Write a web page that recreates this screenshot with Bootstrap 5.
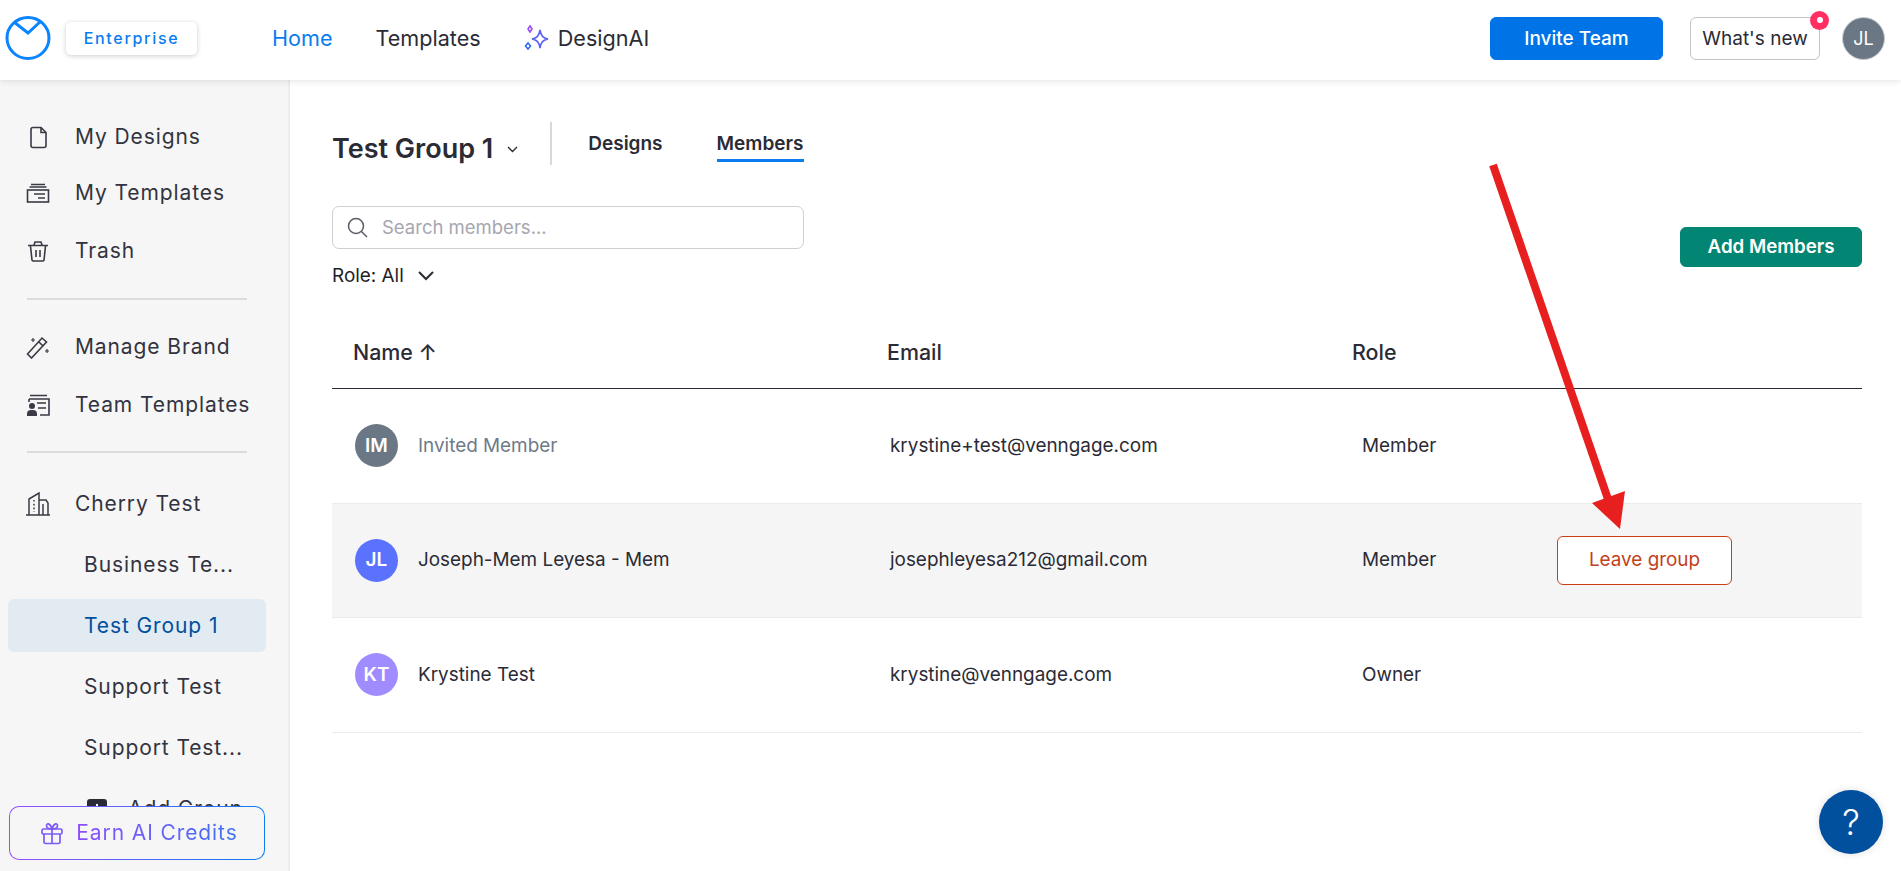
<!DOCTYPE html>
<html lang="en">

<head>
    <meta charset="UTF-8" />
    <meta name="viewport" content="width=device-width, initial-scale=1.0" />
    <title>Test Group 1 - Members</title>
    <link rel="stylesheet" href="https://cdn.jsdelivr.net/npm/bootstrap@5.3.3/dist/css/bootstrap.min.css">
    <style>
        html, body { height: 100%; overflow: hidden; }
        body { font-family: Inter, "Liberation Sans", sans-serif; color: #2b2b36; background: #fff; }

        /* top bar */
        .top-bar { height: 80px; padding: 0 16px 4px 5px; background: #fff; box-shadow: 0 1px 6px rgba(0, 0, 0, .12); position: relative; z-index: 3; }
        .plan-tag { width: 131px; height: 33px; margin-left: 15px; border-radius: 5px; box-shadow: 0 1px 5px rgba(0, 0, 0, .2); color: #0a7cf0; font-size: 16px; font-weight: 500; letter-spacing: 1.7px; }
        .top-link { font-size: 21.6px; color: #2b2b36; text-decoration: none; }
        .top-link.on { color: #0a7cf0; }
        .top-links { margin-left: 75px; gap: 43px; }
        .invite-btn { width: 173px; height: 43px; padding: 3px 0 0; background: #0073e6; border-color: #0073e6; font-size: 19px; font-weight: 500; }
        .new-btn { width: 130px; height: 43px; margin-left: 27px; padding: 3px 0 0; border: 1px solid #c4c4c4; font-size: 19px; color: #2b2b36; background: #fff; }
        .new-dot { top: -7px; right: -10px; width: 19px; height: 19px; background: #ff2f63; }
        .new-dot::after { content: ""; width: 6px; height: 6px; border-radius: 50%; background: #fff; }
        .user-pic { width: 43px; height: 43px; margin-left: 22px; background: #6b7785; color: #fff; font-size: 18px; border: 1px solid #c9cdd2; }

        /* left column */
        .page-body { height: calc(100% - 80px); }
        .side-col { width: 290px; flex: none; padding-top: 28px; background: #f6f6f6; border-right: 2px solid #ededed; overflow: hidden; }
        .side-link { height: 57px; padding-left: 26px; font-size: 21px; letter-spacing: .9px; color: #333340; }
        .side-link.up { margin-top: -1px; margin-bottom: 1px; }
        .side-link svg { width: 24px; height: 24px; margin-right: 25px; flex: none; }
        .side-rule { width: 220px; margin: 19px 0 19px 27px; border-top: 2px solid #dcdcdc; opacity: 1; }
        .side-rule.tight { margin-top: 18px; margin-bottom: 22px; }
        .side-sub { height: 53px; margin: 8px 0 0 8px; width: 258px; padding-left: 76px; font-size: 21px; letter-spacing: .9px; color: #333340; border-radius: 6px; }
        .side-sub.first { margin-top: 6px; }
        .side-sub.on { background: #e2eaf2; color: #00509d; }
        .add-sign { margin: 0 21px 0 3px; flex: none; }
        .credit-btn { position: absolute; left: 9px; top: 726px; width: 256px; height: 54px; padding: 0 0 0 4px; gap: 12px; border: 1px solid transparent; border-radius: 10px; background: linear-gradient(#f6f6f6, #f6f6f6) padding-box, linear-gradient(90deg, #9a4dff, #0a7cf0) border-box; font-size: 21px; letter-spacing: .9px; }
        .credit-text { background: linear-gradient(90deg, #8b4dff, #3f72f0); -webkit-background-clip: text; background-clip: text; color: transparent; }

        /* main column */
        .main-col { padding: 0 39px 0 42px; min-width: 0; }
        .group-head { height: 85px; padding-top: 42px; }
        .group-title { height: 43px; padding-top: 11px; }
        .group-name { font-size: 27px; font-weight: 600; margin: 0; }
        .group-caret { margin-left: 14px; }
        .head-sep { width: 2px; height: 43px; margin: 0 36px 0 32px; background: #d8d8d8; }
        .tab-row { height: 43px; }
        .tab-item { font-size: 19px; font-weight: 600; color: #2b2b36; text-decoration: none; padding-bottom: 0; border-bottom: 3px solid transparent; margin-right: 54px; margin-top: 5px; }
        .tab-item.on { border-bottom-color: #0a7cf0; }
        .tool-row { margin-top: 41px; height: 96px; }
        .find-box { width: 472px; height: 43px; padding-left: 14px; border: 1px solid #cfd0d4; border-radius: 7px; }
        .find-box input { border: 0; outline: 0; padding: 0; margin-left: 14px; font-size: 18.5px; flex: 1; background: transparent; }
        .find-box input::placeholder { color: #a6a6b0; }
        .role-pick { margin-top: 15px; font-size: 18.9px; line-height: 24px; color: #1e1e28; }
        .role-caret { margin-left: 14px; }
        .add-btn { width: 182px; height: 40px; margin-top: 21px; padding: 0; background: #028673; border-color: #028673; font-size: 18.7px; font-weight: 600; }

        .member-tbl { table-layout: fixed; width: 100%; margin: 0; font-size: 18.9px; border-collapse: separate; border-spacing: 0; }
        .member-tbl th { height: 87px; font-size: 21.4px; font-weight: 500; vertical-align: middle; border-bottom: 1px solid #2b2b36; padding: 14px 0 0 21px; color: #2b2b36; }
        .member-tbl td { height: 114.5px; padding: 0; vertical-align: middle; border-bottom: 1px solid #ebebeb; color: #2b2b36; background: transparent; box-shadow: none; }
        .member-tbl tr.hov td { background: #f5f5f5; }
        .face { width: 43px; height: 43px; margin: 0 20px 0 23px; color: #fff; font-size: 19px; font-weight: 600; flex: none; }
        .face-grey { background: #6b7785; }
        .face-blue { background: #5b72ff; }
        .face-lilac { background: #a18cff; }
        .invited { color: #6f7a87; }
        .col-name { width: 555px; }
        .col-mail { width: 465px; }
        .col-role { width: 205px; }
        .member-tbl th.col-mail, .member-tbl th.col-role { padding-left: 0; }
        .member-tbl td.cell-mail { padding-left: 3px; }
        .member-tbl td.cell-role { padding-left: 10px; }
        .leave-btn { width: 175px; height: 49px; padding: 0; border: 1px solid #cc3d14; background: #fff; color: #c2411c; font-size: 18.9px; font-weight: 400; }

        /* things on top of the page */
        .red-arrow { position: absolute; left: 0; top: 0; z-index: 5; pointer-events: none; }
        .help-btn { position: absolute; right: 18px; bottom: 17px; width: 64px; height: 64px; background: #00509d; color: #fff; font-size: 35px; font-weight: 300; box-shadow: 0 0 8px rgba(0, 0, 0, .12); z-index: 6; }
    </style>
</head>

<body>

    <header class="top-bar d-flex align-items-center">
        <svg width="46" height="44" viewBox="0 0 46 44">
            <ellipse cx="23" cy="22" rx="21" ry="20.5" fill="none" stroke="#0a84ff" stroke-width="3" />
            <path d="M9 6 L23 17 L36 5" fill="none" stroke="#0a84ff" stroke-width="3" />
        </svg>
        <div class="plan-tag d-flex align-items-center justify-content-center">Enterprise</div>
        <nav class="top-links d-flex align-items-center">
            <a class="top-link on" href="#">Home</a>
            <a class="top-link" href="#">Templates</a>
            <a class="top-link d-flex align-items-center gap-2" href="#">
                <svg width="26" height="28" viewBox="0 0 26 28" fill="none" stroke-width="1.6">
                    <path d="M16 6 C17 12 19 14 24 15 C19 16 17 18 16 24 C15 18 13 16 8 15 C13 14 15 12 16 6Z" stroke="#5a63f5" />
                    <path d="M6 2 L8 5 L6 8 L4 5Z" stroke="#9a4dff" />
                    <path d="M4 19 L6.5 22 L4 25 L1.5 22Z" stroke="#2f6df0" />
                </svg>
                DesignAI
            </a>
        </nav>
        <button class="btn btn-primary invite-btn ms-auto" type="button">Invite Team</button>
        <button class="btn new-btn position-relative" type="button">What's new
            <span class="new-dot position-absolute rounded-circle d-flex align-items-center justify-content-center"></span>
        </button>
        <div class="user-pic rounded-circle d-flex align-items-center justify-content-center">JL</div>
    </header>

    <div class="page-body d-flex">
        <aside class="side-col position-relative">
            <div class="side-link d-flex align-items-center">
                <svg viewBox="0 0 24 24" fill="none" stroke="#3a3a46" stroke-width="1.6"><path d="M5 4.5 a2 2 0 0 1 2-2 h8 l5 5 v13 a2 2 0 0 1-2 2 H7 a2 2 0 0 1-2-2Z" /><path d="M15 2.5 v5 h5" /></svg>
                My Designs
            </div>
            <div class="side-link up d-flex align-items-center">
                <svg viewBox="0 0 24 24" fill="none" stroke="#3a3a46" stroke-width="1.6"><rect x="1.5" y="9" width="21" height="12" /><path d="M3.5 6 h17 M5 3.5 h14 M8 13 h11 M12 17 h7" /></svg>
                My Templates
            </div>
            <div class="side-link d-flex align-items-center">
                <svg viewBox="0 0 24 24" fill="none" stroke="#3a3a46" stroke-width="1.6"><path d="M2 6.5 h20 M8 6 l1-3 h6 l1 3 M4.5 7 l1.5 14 a1.5 1.5 0 0 0 1.5 1 h9 a1.5 1.5 0 0 0 1.5-1 L19.5 7 M10 11 v7 M14 11 v7" /></svg>
                Trash
            </div>
            <hr class="side-rule">
            <div class="side-link up d-flex align-items-center">
                <svg viewBox="0 0 24 24" fill="none" stroke="#3a3a46" stroke-width="1.6"><path d="M1.5 19 L16 3 L20.5 7 L5.5 23Z M13 7 L17 11" /><path d="M7 3 v4 M5 5 h4 M21 14 v4 M19 16 h4" stroke-width="1.2" /></svg>
                Manage Brand
            </div>
            <div class="side-link d-flex align-items-center">
                <svg viewBox="0 0 24 24" fill="none" stroke="#3a3a46" stroke-width="1.6"><path d="M4 2.5 h17 M3 6 h20 v16 h-9 M11 10 h9 M12 15 h8 M3 6 v3" /><circle cx="6" cy="13" r="3" fill="#3a3a46" stroke="none" /><path d="M1 23 v-2 a4 4 0 0 1 4-4 h2 a4 4 0 0 1 4 4 v2Z" fill="#3a3a46" stroke="none" /></svg>
                Team Templates
            </div>
            <hr class="side-rule tight">
            <div class="side-link d-flex align-items-center">
                <svg viewBox="0 0 24 24" fill="none" stroke="#3a3a46" stroke-width="1.5"><path d="M0 23 h24 M3 23 V7 L13 1 V23 M13 8 h7 l2 3 V23 M17 12 v11" /><path d="M8 8 v12" stroke-dasharray="1.6 2.2" /></svg>
                Cherry Test
            </div>
            <div class="side-sub first d-flex align-items-center">Business Te...</div>
            <div class="side-sub on d-flex align-items-center">Test Group 1</div>
            <div class="side-sub d-flex align-items-center">Support Test</div>
            <div class="side-sub d-flex align-items-center">Support Test...</div>
            <div class="side-sub d-flex align-items-center">
                <svg class="add-sign" width="20" height="20" viewBox="0 0 20 20"><rect width="20" height="20" rx="3" fill="#2b2b36" /><path d="M10 5 v10 M5 10 h10" stroke="#fff" stroke-width="2" /></svg>
                Add Group
            </div>
            <button class="credit-btn d-flex align-items-center justify-content-center" type="button">
                <svg width="24" height="24" viewBox="0 0 24 24" fill="none" stroke="#7d5cf5" stroke-width="1.7"><rect x="2" y="8" width="20" height="5" rx="1.5" /><path d="M4 13 v8 a1.5 1.5 0 0 0 1.5 1.5 h13 a1.5 1.5 0 0 0 1.5-1.5 v-8 M12 8 v14.5 M12 8 C9 8 6.5 7 6.5 4.5 S10 1.5 12 8 C14 1.5 17.5 2 17.5 4.5 S15 8 12 8Z" /></svg>
                <span class="credit-text">Earn AI Credits</span>
            </button>
        </aside>

        <main class="main-col flex-grow-1">
            <div class="group-head d-flex align-items-start">
                <div class="group-title d-flex align-items-center">
                    <h1 class="group-name">Test Group 1</h1>
                    <svg class="group-caret" width="11" height="7" viewBox="0 0 11 7" fill="none" stroke="#2b2b36" stroke-width="1.4"><path d="M1 1 L5.5 5.5 L10 1" /></svg>
                </div>
                <div class="head-sep"></div>
                <div class="tab-row d-flex align-items-center">
                    <a class="tab-item" href="#">Designs</a>
                    <a class="tab-item on" href="#">Members</a>
                </div>
            </div>

            <div class="tool-row d-flex justify-content-between align-items-start">
                <div>
                    <div class="find-box d-flex align-items-center">
                        <svg width="21" height="21" viewBox="0 0 21 21" fill="none" stroke="#5c5c66" stroke-width="1.5"><circle cx="9" cy="9" r="7.5" /><path d="M14.5 14.5 L20 20" /></svg>
                        <input type="text" placeholder="Search members...">
                    </div>
                    <div class="role-pick d-flex align-items-center">Role: All
                        <svg class="role-caret" width="16" height="10" viewBox="0 0 16 10" fill="none" stroke="#2b2b36" stroke-width="2"><path d="M1 1 L8 8 L15 1" /></svg>
                    </div>
                </div>
                <button class="btn btn-success add-btn" type="button">Add Members</button>
            </div>

            <table class="table member-tbl">
                <thead>
                    <tr>
                        <th class="col-name">Name ↑</th>
                        <th class="col-mail">Email</th>
                        <th class="col-role">Role</th>
                        <th></th>
                    </tr>
                </thead>
                <tbody>
                    <tr>
                        <td>
                            <div class="d-flex align-items-center invited">
                                <div class="face face-grey rounded-circle d-flex align-items-center justify-content-center">IM</div>
                                Invited Member
                            </div>
                        </td>
                        <td class="cell-mail">krystine+test@venngage.com</td>
                        <td class="cell-role">Member</td>
                        <td></td>
                    </tr>
                    <tr class="hov">
                        <td>
                            <div class="d-flex align-items-center">
                                <div class="face face-blue rounded-circle d-flex align-items-center justify-content-center">JL</div>
                                Joseph-Mem Leyesa - Mem
                            </div>
                        </td>
                        <td class="cell-mail">josephleyesa212@gmail.com</td>
                        <td class="cell-role">Member</td>
                        <td><button class="btn leave-btn" type="button">Leave group</button></td>
                    </tr>
                    <tr>
                        <td>
                            <div class="d-flex align-items-center">
                                <div class="face face-lilac rounded-circle d-flex align-items-center justify-content-center">KT</div>
                                Krystine Test
                            </div>
                        </td>
                        <td class="cell-mail">krystine@venngage.com</td>
                        <td class="cell-role">Owner</td>
                        <td></td>
                    </tr>
                </tbody>
            </table>
        </main>
    </div>

    <!-- red annotation drawn on the screenshot -->
    <svg class="red-arrow" width="1901" height="871" viewBox="0 0 1901 871">
        <path d="M1493 165 L1609 502" stroke="#e81f1f" stroke-width="8" fill="none" />
        <path d="M1592 503 L1625 491 L1620 529Z" fill="#e81f1f" />
    </svg>

    <div class="help-btn rounded-circle d-flex align-items-center justify-content-center">?</div>

    <script src="https://cdn.jsdelivr.net/npm/bootstrap@5.3.3/dist/js/bootstrap.bundle.min.js"></script>
</body>

</html>
